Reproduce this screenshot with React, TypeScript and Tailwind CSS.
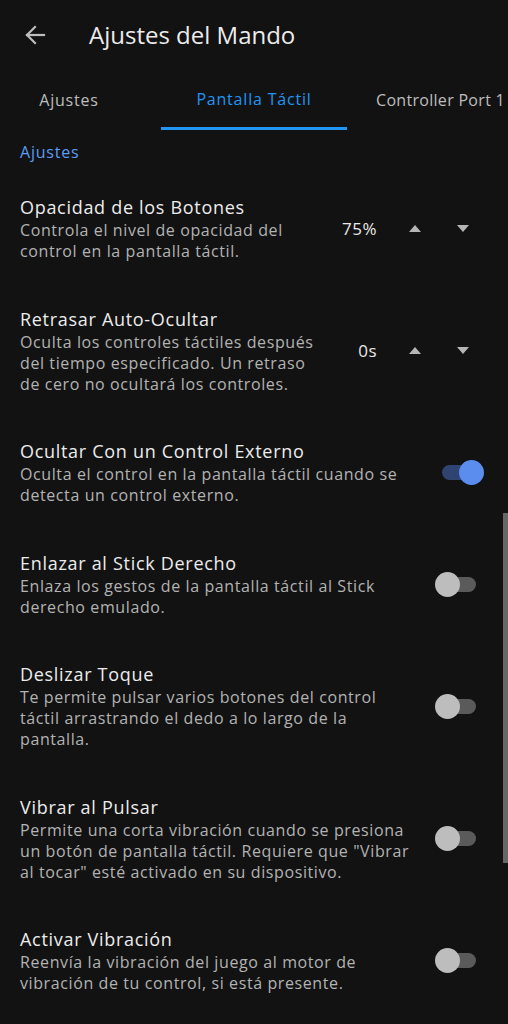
import React from "react";

const font = { fontFamily: '"Open Sans", "Noto Sans", sans-serif' };

function Stepper({ value }: { value: string }) {
  return (
    <div className="flex items-center shrink-0">
      <span className="text-[17px] text-[#e8e8e8] text-right w-[50px] tracking-[0.5px]">{value}</span>
      <div className="w-[14px]" />
      <button className="w-[48px] h-[40px] flex items-center justify-center">
        <svg width="12" height="7" viewBox="0 0 12 7"><path d="M0 7 L6 0 L12 7 Z" fill="#b5b5b5" /></svg>
      </button>
      <button className="w-[48px] h-[40px] flex items-center justify-center">
        <svg width="12" height="7" viewBox="0 0 12 7"><path d="M0 0 L6 7 L12 0 Z" fill="#b5b5b5" /></svg>
      </button>
    </div>
  );
}

function Toggle({ on }: { on: boolean }) {
  return (
    <div className="relative w-[49px] h-[25px] shrink-0">
      <div className={`absolute left-[7px] top-[5px] w-[34px] h-[15px] rounded-full ${on ? "bg-[#2f4470]" : "bg-[#5a5a5a]"}`} />
      <div className={`absolute top-0 w-[25px] h-[25px] rounded-full ${on ? "right-0 bg-[#5b8def]" : "left-0 bg-[#bdbdbd]"}`} />
    </div>
  );
}

function Item({ title, lines, control }: { title: string; lines: string[]; control: React.ReactNode }) {
  return (
    <div className="flex items-center pl-5 pt-[22px] pb-[22.5px]">
      <div className="flex-1 min-w-0">
        <div className="text-[18px] leading-[25px] text-[#ececec] tracking-[0.7px] whitespace-nowrap">{title}</div>
        <div className="text-[16px] leading-[21px] text-[#b3b3b3] tracking-[0.6px]">
          {lines.map((l, i) => (
            <div key={i} className="whitespace-nowrap">{l}</div>
          ))}
        </div>
      </div>
      {control}
    </div>
  );
}

export default function App() {
  return (
    <div className="w-[508px] h-[1024px] bg-[#121212] overflow-hidden relative" style={font}>
      <div className="h-[70px] flex items-center">
        <div className="w-[89px] flex items-center pl-[24px]">
          <svg width="22" height="22" viewBox="0 0 22 22" fill="none" stroke="#bdbdbd" strokeWidth="2.2" strokeLinecap="square">
            <path d="M20 11 H3" />
            <path d="M11 3 L3 11 L11 19" />
          </svg>
        </div>
        <div className="text-[24px] text-[#ececec] whitespace-nowrap">Ajustes del Mando</div>
      </div>
      <div className="h-[60px] flex text-[16px] whitespace-nowrap tracking-[0.8px] overflow-hidden">
        <div className="w-[138px] shrink-0 flex items-center justify-center text-[#bdbdbd]">Ajustes</div>
        <div className="ml-[23px] w-[186px] shrink-0 flex flex-col">
          <div className="flex-1 flex items-center justify-center text-[#2196f3]">Pantalla Táctil</div>
          <div className="h-[3px] bg-[#2196f3]" />
        </div>
        <div className="pl-[29px] shrink-0 flex items-center text-[#bdbdbd] tracking-[0.3px]">Controller Port 1</div>
      </div>
      <div className="h-[43px] flex items-center pl-5 text-[16px] text-[#5b9cf5] tracking-[0.8px]">Ajustes</div>

      <Item
        title="Opacidad de los Botones"
        lines={["Controla el nivel de opacidad del", "control en la pantalla táctil."]}
        control={<div className="pr-[21px]"><Stepper value="75%" /></div>}
      />
      <Item
        title="Retrasar Auto-Ocultar"
        lines={["Oculta los controles táctiles después", "del tiempo especificado. Un retraso", "de cero no ocultará los controles."]}
        control={<div className="pr-[21px]"><Stepper value="0s" /></div>}
      />
      <Item
        title="Ocultar Con un Control Externo"
        lines={["Oculta el control en la pantalla táctil cuando se", "detecta un control externo."]}
        control={<div className="pr-[24px]"><Toggle on /></div>}
      />
      <Item
        title="Enlazar al Stick Derecho"
        lines={["Enlaza los gestos de la pantalla táctil al Stick", "derecho emulado."]}
        control={<div className="pr-[24px]"><Toggle on={false} /></div>}
      />
      <Item
        title="Deslizar Toque"
        lines={["Te permite pulsar varios botones del control", "táctil arrastrando el dedo a lo largo de la", "pantalla."]}
        control={<div className="pr-[24px]"><Toggle on={false} /></div>}
      />
      <Item
        title="Vibrar al Pulsar"
        lines={["Permite una corta vibración cuando se presiona", "un botón de pantalla táctil. Requiere que \"Vibrar", "al tocar\" esté activado en su dispositivo."]}
        control={<div className="pr-[24px]"><Toggle on={false} /></div>}
      />
      <Item
        title="Activar Vibración"
        lines={["Reenvía la vibración del juego al motor de", "vibración de tu control, si está presente."]}
        control={<div className="pr-[24px]"><Toggle on={false} /></div>}
      />

      <div className="absolute right-0 top-[513px] w-[5px] h-[350px] bg-[#666666]" />
    </div>
  );
}
